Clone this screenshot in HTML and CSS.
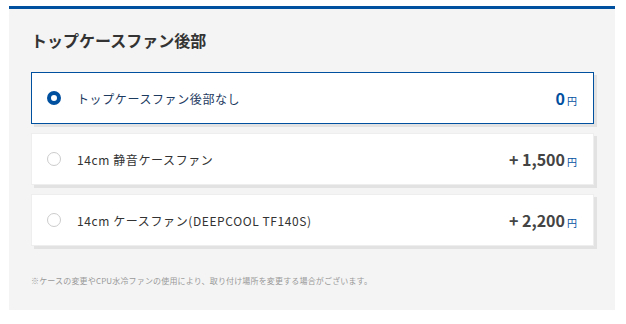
FILE: index.html
```html
<!DOCTYPE html>
<html lang="ja">
<head>
  <meta charset="UTF-8" />
  <title>トップケースファン後部</title>
  <link rel="stylesheet" href="styles.css">
</head>
<body>
  <div class="panel">
    <h2>トップケースファン後部</h2>

    <div class="option selected">
      <span class="radio"></span>
      <span class="name">トップケースファン後部なし</span>
      <span class="price">0<small>円</small></span>
    </div>

    <div class="option">
      <span class="radio"></span>
      <span class="name">14cm 静音ケースファン</span>
      <span class="price">+ 1,500<small>円</small></span>
    </div>

    <div class="option">
      <span class="radio"></span>
      <span class="name">14cm ケースファン(DEEPCOOL TF140S)</span>
      <span class="price">+ 2,200<small>円</small></span>
    </div>

    <p class="note">※ケースの変更やCPU水冷ファンの使用により、取り付け場所を変更する場合がございます。</p>
  </div>
</body>
</html>
```

FILE: styles.css
```css
body {
  margin: 0;
  padding: 6px 11px 0 9px;
  background: #fff;
  font-family: "Noto Sans CJK JP", "Noto Sans", sans-serif;
  color: #333;
}
.panel {
  background: #f4f4f4;
  border-top: 3px solid #0050a0;
  padding: 19px 21px 24px 22px;
}
.panel h2 {
  margin: 0 0 20px;
  font-size: 16px;
  line-height: 24px;
  font-weight: bold;
  color: #333;
}
.option {
  display: flex;
  align-items: center;
  height: 50px;
  margin-bottom: 9px;
  padding: 0 16px 0 15px;
  background: #fff;
  border: 1px solid #eee;
  box-shadow: 3px 3px 0 #e2e2e2;
}
.option.selected {
  border-color: #0050a0;
}
.radio {
  box-sizing: border-box;
  width: 14px;
  height: 14px;
  border-radius: 50%;
  border: 1px solid #ccc;
  margin-right: 16px;
  flex-shrink: 0;
}
.selected .radio {
  border: 4px solid #0050a0;
}
.name {
  flex: 1;
  font-size: 12px;
  letter-spacing: 0.05em;
  color: #333;
}
.selected .name {
  color: #1d3a5f;
}
.price {
  font-size: 16px;
  font-weight: bold;
  color: #444;
}
.price small {
  font-size: 10px;
  font-weight: normal;
  margin-left: 2px;
  color: #0050a0;
}
.selected .price {
  color: #0050a0;
}
.note {
  margin: 29px 0 0;
  font-size: 8px;
  letter-spacing: 0.02em;
  color: #999;
}
```
